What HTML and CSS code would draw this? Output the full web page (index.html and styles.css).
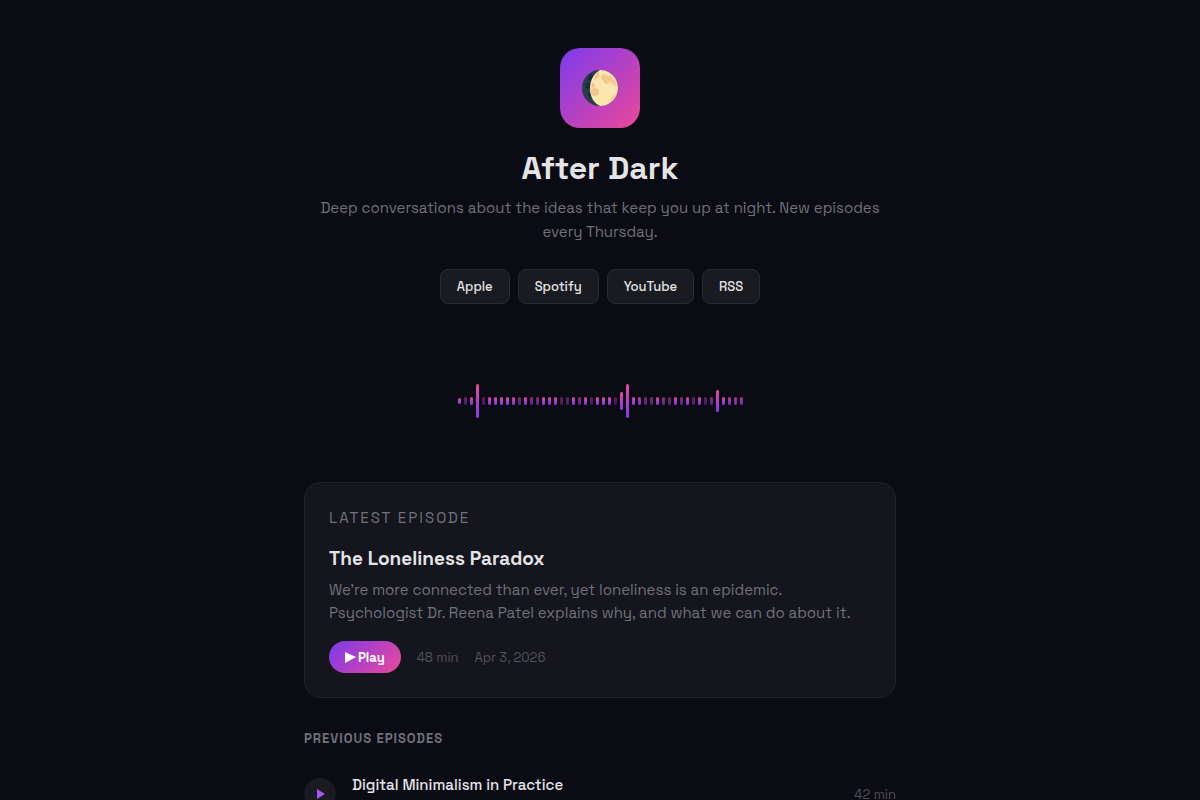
FILE: index.html
```html
<!DOCTYPE html>
<html lang="en">
<head>
  <meta charset="UTF-8">
  <meta name="viewport" content="width=device-width, initial-scale=1.0">
  <title>After Dark</title>
  <link rel="stylesheet" href="styles.css">
</head>
<body>
  <main class="page">
    <header class="hero">
      <div class="logo">
        <svg viewBox="0 0 36 36" aria-hidden="true">
          <circle cx="18" cy="18" r="18" fill="#263f4b"/>
          <path d="M7 5l3-1 1 3-3 4-3-1zM4 13l4-1 1 4-3 3-3-2zM6 22l3 1v4l-3-1z" fill="#172d39"/>
          <path d="M18 0C11 4 8 11 8 19s4 14 10 17a18 18 0 0 0 0-36z" fill="#fce6b0"/>
          <g fill="#f5c68b">
            <path d="M14 3l3-1 1 3-2 3-3 2-1-1z"/>
            <path d="M20 5l3-1 2 2 4 0 2 3 0 4-2 0-1-2-2 3-4-1-1-3-2-1z"/>
            <path d="M30 9l2 0 2 5-1 2-2-2zM10 13l2 0 1 3-2 2-2 1z"/>
            <circle cx="13" cy="22" r="4"/>
            <path d="M32 25l2-1-2 4-3 3-1-1z"/>
          </g>
        </svg>
      </div>
      <h1>After Dark</h1>
      <p class="tagline">Deep conversations about the ideas that keep you up at night. New episodes every Thursday.</p>
      <nav class="platforms">
        <a href="#">Apple</a>
        <a href="#">Spotify</a>
        <a href="#">YouTube</a>
        <a href="#">RSS</a>
      </nav>
    </header>

    <div class="waveform" id="waveform"></div>

    <section class="featured">
      <div class="featured-label">Latest Episode</div>
      <h2>The Loneliness Paradox</h2>
      <p>We’re more connected than ever, yet loneliness is an epidemic. Psychologist Dr. Reena Patel explains why, and what we can do about it.</p>
      <div class="featured-meta">
        <button class="play-btn" type="button">
          <svg viewBox="0 0 11 12" aria-hidden="true"><path d="M0 1l11 5-11 6z"/></svg>
          Play
        </button>
        <span>48 min</span>
        <span>Apr 3, 2026</span>
      </div>
    </section>

    <section class="episodes">
      <h3>Previous Episodes</h3>
      <div class="episode">
        <button class="episode-play" type="button" aria-label="Play">
          <svg viewBox="0 0 10 10" aria-hidden="true"><path d="M2 0l8 5-8 5z"/></svg>
        </button>
        <div class="episode-title">Digital Minimalism in Practice</div>
        <span class="episode-time">42 min</span>
      </div>
    </section>
  </main>

  <script>
    const waveform = document.getElementById('waveform');
    const levels = [
      100, 45, 95, 100, 40, 95, 95, 100, 100, 95, 55, 95,
      60, 60, 100, 95, 95, 40, 45, 95, 60, 95, 40, 100,
      100, 100, 35, 100, 100, 100, 85, 55, 55, 95, 65, 50,
      95, 60, 95, 45, 95, 40, 60, 100, 95, 80, 75, 75
    ];
    const peaks = { 0: 6, 3: 34, 27: 18, 28: 34, 43: 22 };

    levels.forEach((level, i) => {
      const bar = document.createElement('div');
      bar.className = 'bar';
      bar.style.height = (peaks[i] || 8) + 'px';
      bar.style.opacity = level / 100;
      waveform.appendChild(bar);
    });
  </script>
</body>
</html>
```
FILE: styles.css
```css
* {
  box-sizing: border-box;
  margin: 0;
  padding: 0;
}

body {
  background: #0b0b13;
  color: #e4e4e7;
  font-family: "Space Grotesk", Inter, sans-serif;
  font-size: 15px;
  line-height: 24px;
}

.page {
  max-width: 640px;
  margin: 0 auto;
  padding: 48px 24px 0;
}

.hero {
  text-align: center;
}

.logo {
  display: flex;
  align-items: center;
  justify-content: center;
  width: 80px;
  height: 80px;
  margin: 0 auto 20px;
  border-radius: 20px;
  background: linear-gradient(135deg, #7c3aed, #ec4899);
}

.logo svg {
  width: 36px;
  height: 36px;
}

h1 {
  font-size: 32px;
  line-height: 40px;
  margin-bottom: 8px;
}

.tagline {
  color: #71717a;
  margin-bottom: 25px;
}

.platforms {
  display: flex;
  justify-content: center;
  gap: 8px;
}

.platforms a {
  padding: 7px 16px;
  border: 1px solid #2a2b2f;
  border-radius: 8px;
  background: #1a1b20;
  color: #e4e4e7;
  font-size: 13px;
  font-weight: 500;
  line-height: 19px;
  text-decoration: none;
}

.waveform {
  display: flex;
  align-items: center;
  justify-content: center;
  gap: 3px;
  height: 80px;
  margin: 57px 0 41px;
}

.bar {
  width: 3px;
  border-radius: 2px;
  background: linear-gradient(to top, #7c3aed, #ec4899);
}

.featured {
  padding: 24px;
  border: 1px solid #222328;
  border-radius: 16px;
  background: #15151d;
}

.featured-label {
  margin-bottom: 16px;
  color: #71717a;
  font-size: 15px;
  letter-spacing: 2px;
  line-height: 22px;
  text-transform: uppercase;
}

h2 {
  font-size: 19px;
  font-weight: 600;
  line-height: 28px;
  margin-bottom: 5px;
}

.featured p {
  color: #71717a;
  line-height: 23px;
  margin-bottom: 17px;
}

.featured-meta {
  display: flex;
  align-items: center;
  gap: 16px;
  color: #52525b;
  font-size: 13px;
  line-height: 21px;
}

.play-btn {
  display: flex;
  align-items: center;
  gap: 2px;
  height: 32px;
  padding: 0 16px;
  border: none;
  border-radius: 16px;
  background: linear-gradient(135deg, #7c3aed, #ec4899);
  color: #fff;
  font: 600 13px "Space Grotesk", Inter, sans-serif;
  cursor: pointer;
}

.play-btn svg {
  width: 11px;
  height: 12px;
  fill: #fff;
}

.episodes {
  margin-top: 32px;
}

h3 {
  color: #71717a;
  font-size: 13px;
  font-weight: 600;
  letter-spacing: 1px;
  line-height: 18px;
  text-transform: uppercase;
}

.episode {
  display: flex;
  align-items: center;
  gap: 16px;
  height: 62px;
  margin-top: 15px;
}

.episode-play {
  display: flex;
  align-items: center;
  justify-content: center;
  width: 32px;
  height: 32px;
  border: none;
  border-radius: 50%;
  background: #1a1b20;
  cursor: pointer;
}

.episode-play svg {
  width: 10px;
  height: 10px;
  fill: #a855f7;
}

.episode-title {
  flex: 1;
  height: 40px;
  font-weight: 500;
  line-height: 22px;
}

.episode-time {
  color: #52525b;
  font-size: 13px;
  line-height: 21px;
}
```
